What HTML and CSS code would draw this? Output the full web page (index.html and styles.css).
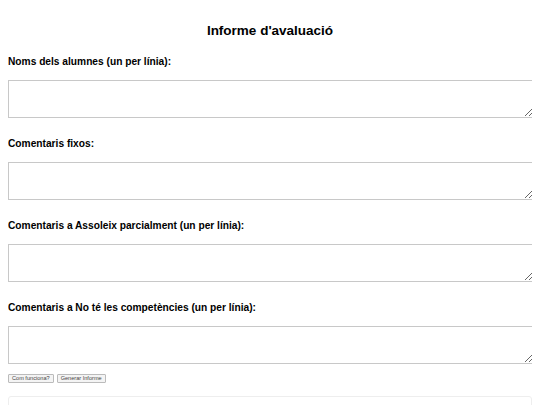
FILE: index.html
```html
<!DOCTYPE html>
<html lang="ca">
<head>
    <meta charset="UTF-8">
    <meta name="viewport" content="width=device-width, initial-scale=1.0">
    <title>Informe d'avaluació</title>
    <link rel="stylesheet" href="styles.css">
</head>
<body>
    <h1 class="title">Informe d'avaluació</h1>

    <div class="field">
        <label class="field-label" for="alumnes">Noms dels alumnes (un per línia):</label>
        <textarea id="alumnes" class="field-input"></textarea>
    </div>

    <div class="field">
        <label class="field-label" for="fixos">Comentaris fixos:</label>
        <textarea id="fixos" class="field-input"></textarea>
    </div>

    <div class="field">
        <label class="field-label" for="parcial">Comentaris a Assoleix parcialment (un per línia):</label>
        <textarea id="parcial" class="field-input"></textarea>
    </div>

    <div class="field field-last">
        <label class="field-label" for="no-te">Comentaris a No té les competències (un per línia):</label>
        <textarea id="no-te" class="field-input"></textarea>
    </div>

    <div class="actions">
        <button class="btn">Com funciona?</button>
        <button class="btn">Generar Informe</button>
    </div>

    <div class="result"></div>
</body>
</html>
```

FILE: styles.css
```css
* {
    box-sizing: border-box;
}

body {
    margin: 8px;
    font-family: 'Liberation Sans', Arial, sans-serif;
    color: #000;
    background: #fff;
}

.title {
    font-size: 13.5px;
    font-weight: bold;
    line-height: 18px;
    text-align: center;
    margin: 14px 0 15px;
}

.field {
    margin-bottom: 19px;
}

.field-label {
    display: block;
    font-size: 10.2px;
    font-weight: bold;
    line-height: 14px;
    margin-bottom: 11px;
}

.field-input {
    display: block;
    width: 526px;
    height: 38px;
    border: 1px solid #c8c8c8;
    padding: 2px;
    margin: 0;
}

.field-last {
    margin-bottom: 10px;
}

.actions {
    display: flex;
    gap: 3px;
    margin-bottom: 13px;
}

.btn {
    font-family: 'Liberation Sans', Arial, sans-serif;
    font-size: 5.6px;
    height: 9px;
    line-height: 7px;
    padding: 0 3px;
    color: #444;
    background: #f4f4f4;
    border: 1px solid #bbb;
    border-radius: 1px;
}

.result {
    width: 524px;
    height: 40px;
    border: 1px solid #eee;
    border-radius: 3px;
}
```
